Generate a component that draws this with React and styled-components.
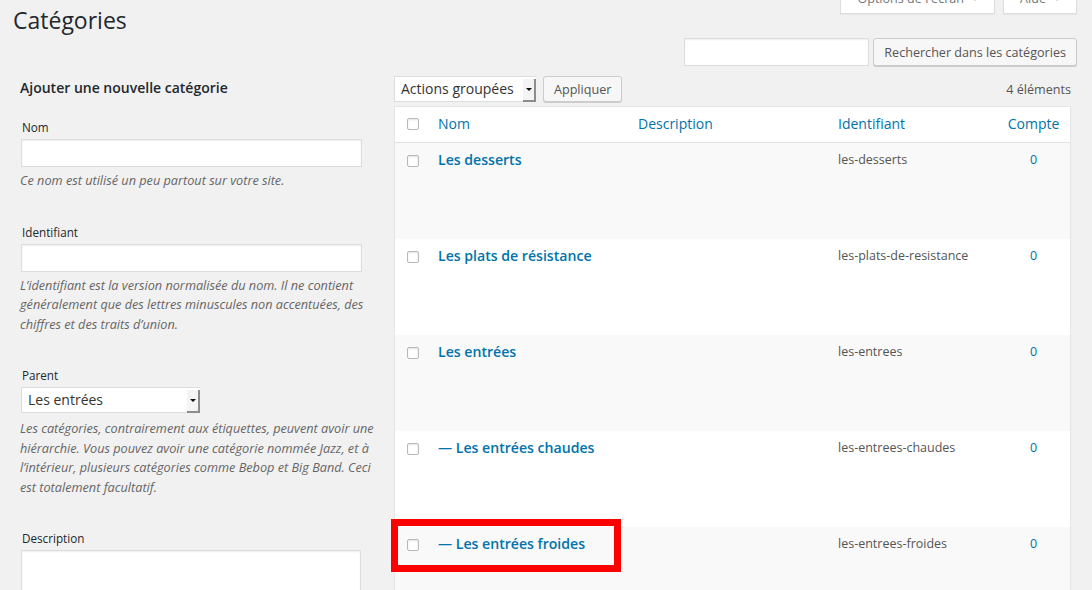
import React from "react";
import styled, { createGlobalStyle } from "styled-components";

const Global = createGlobalStyle`
  html, body { margin: 0; padding: 0; overflow: hidden; background: #f1f1f1; }
  body { font-family: "Open Sans", sans-serif; font-size: 12.6px; color: #444; }
  * { box-sizing: border-box; }
`;

const Page = styled.div`
  padding: 0 15px 0 13px;
  height: 590px;
`;

const Header = styled.header`
  display: flex;
  justify-content: space-between;
  align-items: flex-start;
`;

const Title = styled.h1`
  margin: 6px 0 0;
  font-size: 23px;
  line-height: 29px;
  font-weight: 400;
  color: #23282d;
`;

const HeadRight = styled.div`
  display: flex;
  flex-direction: column;
  align-items: flex-end;
`;

const ScreenTabs = styled.div`
  display: flex;
  gap: 8px;
  margin-top: -14px;
`;

const Tab = styled.button`
  height: 28px;
  padding: 2px 16px 0;
  display: flex;
  align-items: flex-start;
  gap: 8px;
  background: #fff;
  border: 1px solid #ddd;
  border-top: none;
  box-shadow: 0 1px 1px rgba(0, 0, 0, 0.04);
  font-family: inherit;
  font-size: 12.6px;
  line-height: 22px;
  color: #72777c;
`;

const TabArrow = styled.span`
  margin-top: 9px;
  width: 0;
  height: 0;
  border-left: 3px solid transparent;
  border-right: 3px solid transparent;
  border-top: 4px solid #a0a5aa;
`;

const SearchBox = styled.div`
  display: flex;
  gap: 4px;
  margin-top: 24px;
`;

const TextInput = styled.input`
  display: block;
  width: ${(p) => p.$w || "341px"};
  height: 28px;
  margin: ${(p) => p.$m || "0"};
  padding: 3px 5px;
  background: #fff;
  border: 1px solid #ddd;
  box-shadow: inset 0 1px 2px rgba(0, 0, 0, 0.07);
  font-family: inherit;
  font-size: 13px;
  outline: none;
`;

const Button = styled.button`
  height: ${(p) => p.$h || "28px"};
  padding: 0 10px;
  background: #f7f7f7;
  border: 1px solid #ccc;
  border-radius: 3px;
  box-shadow: 0 1px 0 #ccc;
  font-family: inherit;
  font-size: 12.6px;
  color: #555;
  white-space: nowrap;
`;

const Columns = styled.div`
  display: grid;
  grid-template-columns: 356px 677px;
  column-gap: 18px;
  padding: 0 6px 0 7px;
  margin-top: 10px;
`;

const FormCol = styled.section`
  padding-top: 3px;
`;

const FormTitle = styled.h2`
  margin: 0 0 21px;
  font-size: 14px;
  line-height: 18px;
  font-weight: 600;
  color: #23282d;
`;

const Field = styled.div`
  margin-bottom: 32px;
`;

const Label = styled.label`
  display: block;
  padding-left: 2px;
  margin-bottom: 3px;
  font-size: 11.7px;
  line-height: 18px;
  color: #23282d;
`;

const Help = styled.p`
  margin: ${(p) => p.$top || "4px"} 0 0;
  font-size: 12.7px;
  line-height: 19.5px;
  font-style: italic;
  color: #666;
`;

const SelectBox = styled.div`
  display: flex;
  align-items: stretch;
  width: ${(p) => p.$w};
  height: 26px;
  margin: ${(p) => p.$m || "0"};
  background: #fff;
  border: 1px solid #ddd;
  border-right: none;
`;

const SelectText = styled.span`
  flex: 1;
  padding-left: 6px;
  font-size: 14px;
  line-height: 24px;
  color: #333;
  white-space: nowrap;
  overflow: hidden;
`;

const SelectArrow = styled.span`
  width: 13px;
  display: flex;
  align-items: center;
  justify-content: center;
  margin-top: 2px;
  margin-bottom: -1px;
  background: #f4f4f4;
  border-right: 2px solid #8c8c8c;
  border-bottom: 2px solid #8c8c8c;
  &::after {
    content: "";
    width: 0;
    height: 0;
    border-left: 3px solid transparent;
    border-right: 3px solid transparent;
    border-top: 3px solid #111;
  }
`;

const TextArea = styled.textarea`
  display: block;
  width: 340px;
  height: 80px;
  margin: 0 0 0 1px;
  background: #fff;
  border: 1px solid #ddd;
  box-shadow: inset 0 1px 2px rgba(0, 0, 0, 0.07);
  resize: none;
  outline: none;
`;

const ListCol = styled.section``;

const TableNav = styled.div`
  display: flex;
  align-items: center;
  gap: 7px;
  height: 26px;
`;

const Count = styled.span`
  margin-left: auto;
  font-size: 12.6px;
  color: #555;
`;

const Table = styled.div`
  margin-top: 4px;
  background: #fff;
  border: 1px solid #e5e5e5;
  box-shadow: 0 1px 1px rgba(0, 0, 0, 0.04);
`;

const gridCols = "33px 200px 200px 169px 1fr";

const HeadRow = styled.div`
  display: grid;
  grid-template-columns: ${gridCols};
  height: 36px;
  border-bottom: 1px solid #e1e1e1;
`;

const Row = styled.div`
  position: relative;
  display: grid;
  grid-template-columns: ${gridCols};
  height: 96px;
  background: ${(p) => (p.$alt ? "#f9f9f9" : "#fff")};
`;

const CheckCell = styled.div`
  padding: ${(p) => (p.$head ? "11px" : "12px")} 0 0 12px;
`;

const Check = styled.input.attrs({ type: "checkbox" })`
  appearance: none;
  display: block;
  width: 12px;
  height: 12px;
  margin: 0;
  background: #fff;
  border: 1px solid #b4b9be;
  border-radius: 2px;
  box-shadow: inset 0 1px 2px rgba(0, 0, 0, 0.1);
`;

const Cell = styled.div`
  padding: 7px 10px 0;
  line-height: 20px;
  text-align: ${(p) => (p.$center ? "center" : "left")};
  font-size: ${(p) => p.$size || "12.5px"};
  font-weight: ${(p) => p.$weight || 400};
  color: ${(p) => p.$color || "#555"};
  white-space: nowrap;
`;

const Highlight = styled.div`
  position: absolute;
  left: -4px;
  top: -8px;
  width: 230px;
  height: 53px;
  border: 7px solid #ff0000;
  pointer-events: none;
`;

const blue = "#0073aa";

const rows = [
  { name: "Les desserts", slug: "les-desserts" },
  { name: "Les plats de résistance", slug: "les-plats-de-resistance" },
  { name: "Les entrées", slug: "les-entrees" },
  { name: "— Les entrées chaudes", slug: "les-entrees-chaudes" },
  { name: "— Les entrées froides", slug: "les-entrees-froides", mark: true },
];

export default function App() {
  return (
    <>
      <Global />
      <Page>
        <Header>
          <Title>Catégories</Title>
          <HeadRight>
            <ScreenTabs>
              <Tab>
                Options de l'écran <TabArrow />
              </Tab>
              <Tab>
                Aide <TabArrow />
              </Tab>
            </ScreenTabs>
            <SearchBox>
              <TextInput $w="185px" />
              <Button>Rechercher dans les catégories</Button>
            </SearchBox>
          </HeadRight>
        </Header>

        <Columns>
          <FormCol>
            <FormTitle>Ajouter une nouvelle catégorie</FormTitle>
            <Field>
              <Label>Nom</Label>
              <TextInput $m="0 0 0 1px" />
              <Help>Ce nom est utilisé un peu partout sur votre site.</Help>
            </Field>
            <Field>
              <Label>Identifiant</Label>
              <TextInput $m="0 0 0 1px" />
              <Help>
                L’identifiant est la version normalisée du nom. Il ne contient
                généralement que des lettres minuscules non accentuées, des
                chiffres et des traits d’union.
              </Help>
            </Field>
            <Field>
              <Label>Parent</Label>
              <SelectBox $w="179px" $m="2px 0 0 1px">
                <SelectText>Les entrées</SelectText>
                <SelectArrow />
              </SelectBox>
              <Help $top="6px">
                Les catégories, contrairement aux étiquettes, peuvent avoir une
                hiérarchie. Vous pouvez avoir une catégorie nommée Jazz, et à
                l’intérieur, plusieurs catégories comme Bebop et Big Band. Ceci
                est totalement facultatif.
              </Help>
            </Field>
            <Field>
              <Label>Description</Label>
              <TextArea />
            </Field>
          </FormCol>

          <ListCol>
            <TableNav>
              <SelectBox $w="142px">
                <SelectText>Actions groupées</SelectText>
                <SelectArrow />
              </SelectBox>
              <Button $h="26px">Appliquer</Button>
              <Count>4 éléments</Count>
            </TableNav>
            <Table>
              <HeadRow>
                <CheckCell $head>
                  <Check />
                </CheckCell>
                <Cell $size="14px" $color={blue}>Nom</Cell>
                <Cell $size="14px" $color={blue}>Description</Cell>
                <Cell $size="14px" $color={blue}>Identifiant</Cell>
                <Cell $size="14px" $color={blue} $center>Compte</Cell>
              </HeadRow>
              {rows.map((r, i) => (
                <Row key={r.slug} $alt={i % 2 === 0}>
                  <CheckCell>
                    <Check />
                  </CheckCell>
                  <Cell $size="14.1px" $weight={600} $color={blue}>{r.name}</Cell>
                  <Cell />
                  <Cell>{r.slug}</Cell>
                  <Cell $center $color={blue}>0</Cell>
                  {r.mark && <Highlight />}
                </Row>
              ))}
            </Table>
          </ListCol>
        </Columns>
      </Page>
    </>
  );
}
